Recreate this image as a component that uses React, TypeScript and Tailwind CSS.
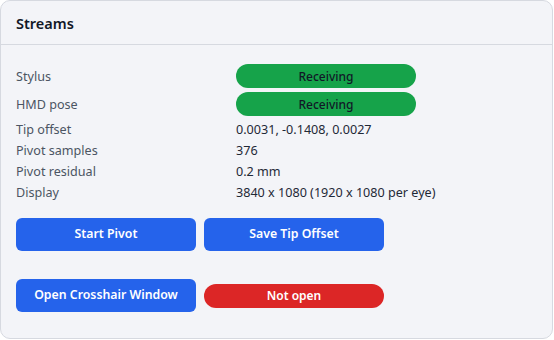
import React from "react";

const rows: [string, string][] = [
  ["Tip offset", "0.0031, -0.1408, 0.0027"],
  ["Pivot samples", "376"],
  ["Pivot residual", "0.2 mm"],
  ["Display", "3840 x 1080 (1920 x 1080 per eye)"],
];

function Pill() {
  return (
    <div className="h-[26px]">
      <div className="w-[180px] h-[24px] rounded-full bg-[#16a34a] flex items-center justify-center text-[12px] font-medium text-[#111827]">
        Receiving
      </div>
    </div>
  );
}

export default function App() {
  return (
    <div
      className="w-[554px] h-[340px] bg-white"
      style={{ fontFamily: '"Noto Sans", "Open Sans", sans-serif' }}
    >
      <div className="w-[553px] h-[339px] bg-[#f3f4f8] border border-[#d6d9e0] rounded-[10px] flex flex-col">
        <div className="h-[44px] border-b border-[#d6d9e0] flex items-center px-[15px] pt-[1px]">
          <span className="text-[14.5px] font-semibold text-[#111827] leading-none">Streams</span>
        </div>
        <div className="px-[15px] pt-[19px] flex flex-col">
          <div className="grid grid-cols-[220px_1fr] gap-y-[2px] text-[12.6px] leading-[19px]">
            <div className="text-[#4b5563] h-[26px] pt-[3px]">Stylus</div>
            <Pill />
            <div className="text-[#4b5563] h-[26px] pt-[3px]">HMD pose</div>
            <Pill />
            {rows.map(([k, v]) => (
              <React.Fragment key={k}>
                <div className="text-[#4b5563]">{k}</div>
                <div className="text-[#1f2937]">{v}</div>
              </React.Fragment>
            ))}
          </div>
          <div className="flex gap-[8px] mt-[16px]">
            <button className="w-[180px] h-[33px] rounded-[6px] bg-[#2563eb] text-white text-[12.3px] font-semibold">
              Start Pivot
            </button>
            <button className="w-[180px] h-[33px] rounded-[6px] bg-[#2563eb] text-white text-[12.3px] font-semibold">
              Save Tip Offset
            </button>
          </div>
          <div className="flex gap-[8px] mt-[28px] items-center">
            <button className="w-[180px] h-[33px] rounded-[6px] bg-[#2563eb] text-white text-[12.3px] font-semibold">
              Open Crosshair Window
            </button>
            <div className="w-[180px] h-[24px] rounded-full bg-[#dc2626] text-white text-[12px] font-semibold flex items-center justify-center">
              Not open
            </div>
          </div>
        </div>
      </div>
    </div>
  );
}
